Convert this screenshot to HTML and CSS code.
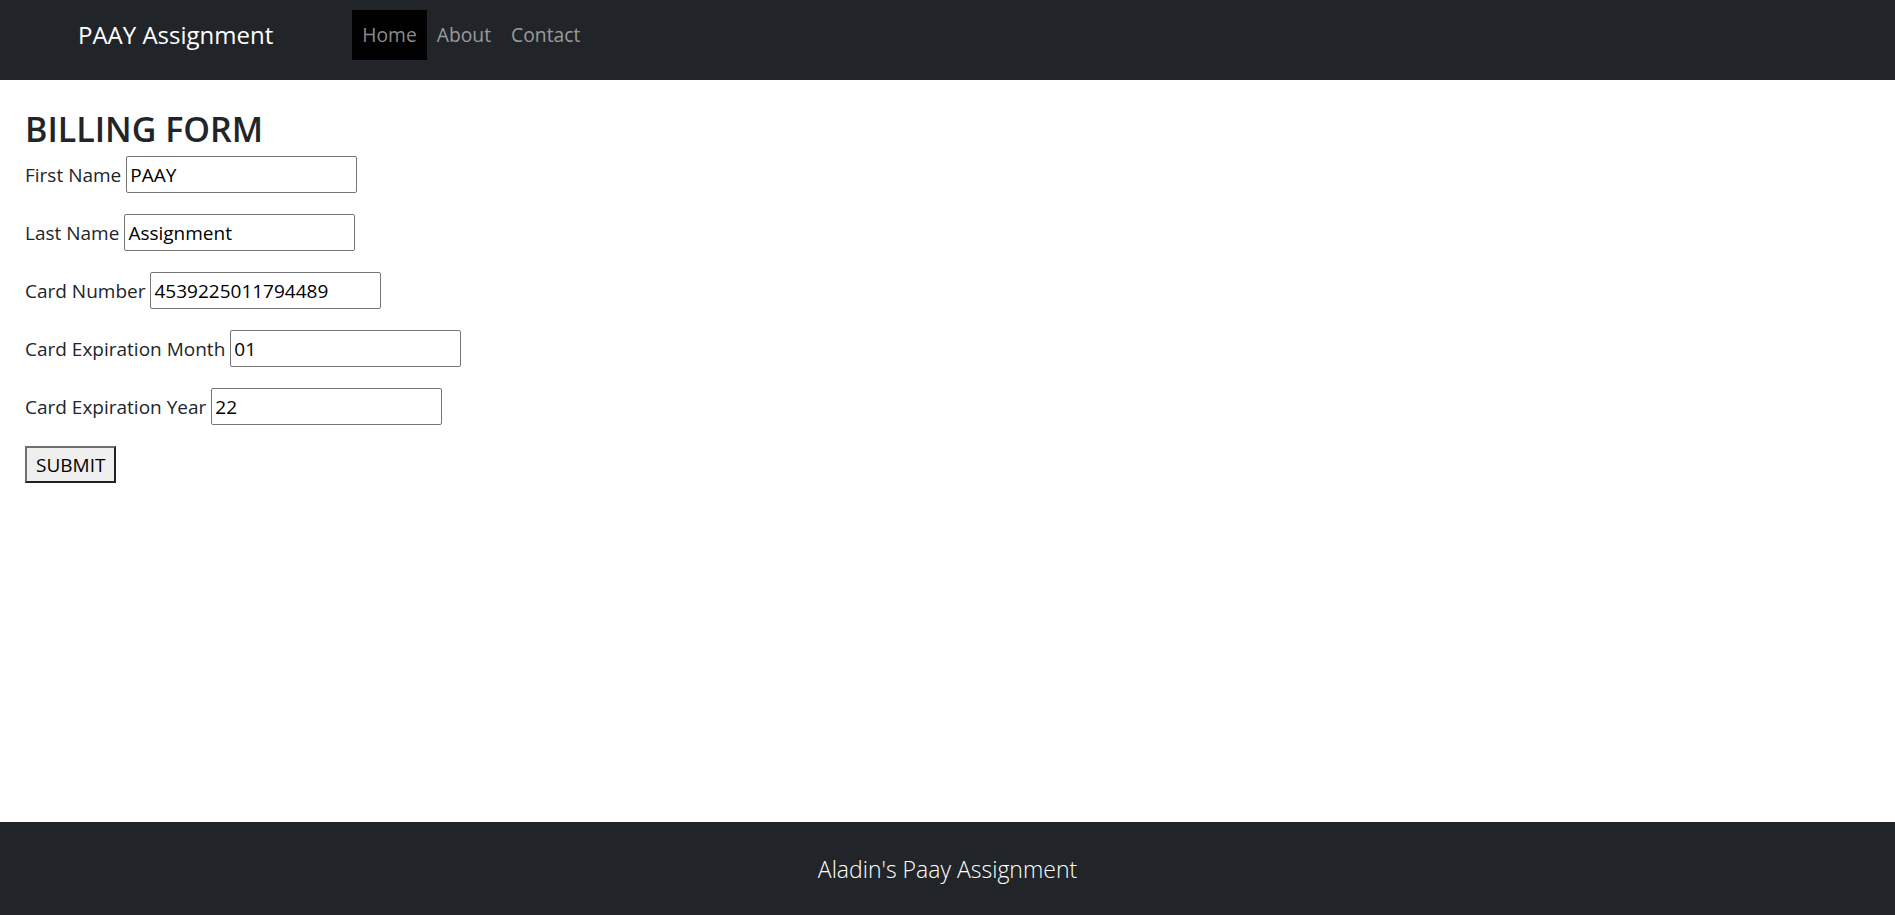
FILE: index.html
```html
<!DOCTYPE html>
<html lang="en">
<head>
<meta charset="utf-8">
<title>PAAY Assignment</title>
<link rel="stylesheet" href="styles.css">
</head>
<body>
<div class="page">
  <header class="navbar">
    <a class="brand" href="#">PAAY Assignment</a>
    <nav class="nav">
      <a class="nav-link active" href="#">Home</a>
      <a class="nav-link" href="#">About</a>
      <a class="nav-link" href="#">Contact</a>
    </nav>
  </header>
  <main class="main">
    <h2 class="title">BILLING FORM</h2>
    <form class="form">
      <div class="row"><label class="label">First Name</label><input class="input" type="text" value="PAAY"></div>
      <div class="row"><label class="label">Last Name</label><input class="input" type="text" value="Assignment"></div>
      <div class="row"><label class="label">Card Number</label><input class="input" type="text" value="4539225011794489"></div>
      <div class="row"><label class="label">Card Expiration Month</label><input class="input" type="text" value="01"></div>
      <div class="row"><label class="label">Card Expiration Year</label><input class="input" type="text" value="22"></div>
      <div class="row"><button class="submit" type="button">SUBMIT</button></div>
    </form>
  </main>
  <footer class="footer">
    <p class="footer-text">Aladin's Paay Assignment</p>
  </footer>
</div>
</body>
</html>
```

FILE: styles.css
```css
* { box-sizing: border-box; }
html, body { margin: 0; padding: 0; height: 100%; }
body {
  font-family: "Open Sans", "Noto Sans", sans-serif;
  font-size: 19px;
  color: #212529;
  background: #fff;
}
.page {
  display: flex;
  flex-direction: column;
  min-height: 100vh;
}
.navbar {
  height: 80px;
  background: #212529;
  display: flex;
  align-items: flex-start;
  padding: 10px 0 0 78px;
}
.brand {
  color: #fff;
  text-decoration: none;
  font-size: 24px;
  line-height: 50px;
  margin-right: 79px;
}
.nav { display: flex; }
.nav-link {
  color: rgba(255,255,255,0.55);
  text-decoration: none;
  font-size: 19.3px;
  line-height: 30px;
  padding: 10px 10px;
}
.nav-link.active { background: #000; }
.main {
  flex: 1;
  padding: 0 25px;
}
.title {
  font-size: 34px;
  font-weight: 600;
  margin: 25px 0 3px;
  line-height: 48px;
}
.form {
  display: flex;
  flex-direction: column;
  gap: 20.5px;
}
.row {
  display: flex;
  align-items: baseline;
  gap: 5px;
}
.label { line-height: 37px; }
.input {
  width: 231px;
  height: 37px;
  border: 1px solid #767676;
  border-radius: 2px;
  padding: 1px 3px;
  font-family: inherit;
  font-size: 19px;
  color: #000;
}
.submit {
  height: 37px;
  padding: 0 9px;
  border: 2px solid #222;
  border-top-color: #6e6e6e;
  border-left-color: #6e6e6e;
  border-radius: 0;
  background: #efefef;
  font-family: inherit;
  font-size: 19px;
  color: #000;
}
.footer {
  height: 93px;
  background: #212529;
  display: flex;
  align-items: center;
  justify-content: center;
}
.footer-text {
  margin: 0;
  color: #fff;
  font-size: 23px;
  font-weight: 300;
}
```
